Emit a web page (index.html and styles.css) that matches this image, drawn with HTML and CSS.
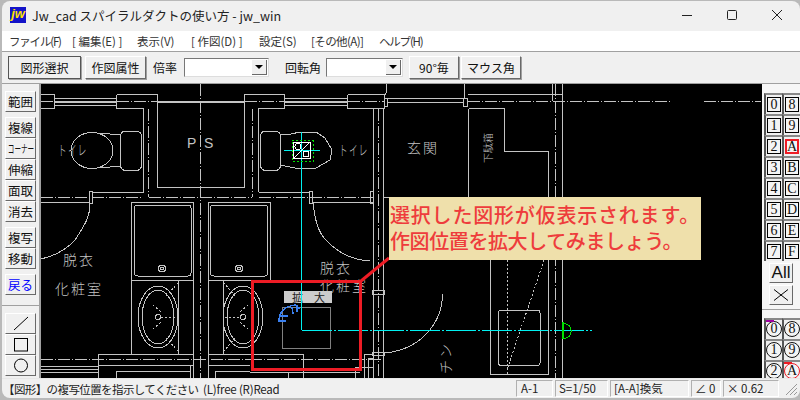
FILE: index.html
```html
<!DOCTYPE html>
<html lang="ja">
<head>
    <meta charset="UTF-8">
    <title>Jw_cad スパイラルダクトの使い方 - jw_win</title>
    <link rel="stylesheet" href="styles.css">
</head>
<body>
<div class="window">
    <div class="titlebar">
        <div class="app-icon">jw</div>
        <div class="title">Jw_cad スパイラルダクトの使い方 - jw_win</div>
        <div class="caption">
            <svg width="12" height="12" viewBox="0 0 12 12"><path d="M1 6.5H11" class="cap-line"/></svg>
            <svg width="12" height="12" viewBox="0 0 12 12"><rect x="1.5" y="1.5" width="9" height="9" rx="1" class="cap-line"/></svg>
            <svg width="12" height="12" viewBox="0 0 12 12"><path d="M1 1L11 11M11 1L1 11" class="cap-line"/></svg>
        </div>
    </div>

    <div class="menubar">
        <span class="kana">ファイル(F)</span>
        <span>[ 編集(E) ]</span>
        <span>表示(V)</span>
        <span>[ 作図(D) ]</span>
        <span>設定(S)</span>
        <span class="kana-some">[その他(A)]</span>
        <span class="kana">ヘルプ(H)</span>
    </div>

    <div class="toolbar">
        <button class="btn btn-default">図形選択</button>
        <button class="btn btn-attr">作図属性</button>
        <span class="tool-label label-scale">倍率</span>
        <div class="combo combo-scale"><div class="combo-arrow"></div></div>
        <span class="tool-label label-angle">回転角</span>
        <div class="combo combo-angle"><div class="combo-arrow"></div></div>
        <button class="btn btn-ninety">90°毎</button>
        <button class="btn btn-mouse">マウス角</button>
    </div>

    <div class="main">
        <div class="side-left">
            <div class="tool-group">
                <button class="tool">範囲</button>
            </div>
            <div class="tool-group">
                <button class="tool">複線</button>
                <button class="tool"><span class="squeeze">コーナー</span></button>
                <button class="tool">伸縮</button>
                <button class="tool">面取</button>
                <button class="tool">消去</button>
            </div>
            <div class="tool-group">
                <button class="tool">複写</button>
                <button class="tool">移動</button>
            </div>
            <div class="tool-group">
                <button class="tool tool-back">戻る</button>
            </div>
            <div class="side-sep"></div>
            <div class="tool-group">
                <button class="tool"><svg width="18" height="15" viewBox="0 0 18 15"><path d="M2 14L16 1" class="draw-icon"/></svg></button>
                <button class="tool"><svg width="16" height="14" viewBox="0 0 16 14"><rect x="1.5" y="0.5" width="13" height="12.5" class="draw-icon"/></svg></button>
                <button class="tool"><svg width="16" height="15" viewBox="0 0 16 15"><circle cx="8" cy="7.5" r="6.5" class="draw-icon"/></svg></button>
            </div>
        </div>

        <div class="canvas">
            <svg class="drawing" width="721" height="294" viewBox="41 84 721 294">
                <!-- walls, top -->
                <g class="line">
                    <path d="M41 94.5H54.5V108.5H41M116.5 94.5H157V101M116.5 94.5V108.5H143.5V192M54.5 98.5H116.5M54.5 105.5H116.5"/>
                    <path d="M157.5 101V187.5H244.5V94.5H284.5V108.5H258.5V192M284.5 98.5H347.5M284.5 105.5H347.5"/>
                    <path d="M347.5 94.5H384.5V108.5H347.5V94.5M384.5 98.5H387.5V106H384.5M387.5 98.5H463.5M387.5 102.5H463.5"/>
                    <path d="M386.5 84V92L384.5 96M464.5 84V98M463.5 98.5H467.5V106H463.5V98.5"/>
                    <path d="M467.5 94.5H562.5M468.5 108.5H504.5V151.5H548.5V197M468.5 108.5V197"/>
                    <path d="M373.5 108.5V378M383.5 108.5V378M562.5 84V378M552.5 84V101"/>
                    <path d="M93 192.5H143.5M258.5 192.5H309M41 202.5H90M313 202.5H373.5M250 202.5H268"/>
                    <path d="M89.5 191.5H92.5V203H89.5ZM309.5 191.5H312.5V203H309.5ZM370.5 191.5H373.5V203H370.5Z"/>
                    <path d="M90 203C90 218 84 226 75 240C66 250 54 256 41 259"/>
                    <path d="M313 203C315 220 318 232 326 240C337 252 352 260 370 261"/>
                    <path d="M384.5 197.5H468.5"/>
                </g>
                <path class="line-thick" d="M54.5 102H116.5M157 102H244.5M284.5 102H347.5"/>
                <g class="line-dash">
                    <path d="M41 101.5H54M116.5 101.5H157M244.5 101.5H284.5M347.5 101.5H384M468 101.5H670M704 101.5H761"/>
                    <path d="M41 197.5H143M148.5 197.5H252M258.5 197.5H373M384 197.5H562"/>
                    <path d="M200.5 84V378M148.5 108.5V197M252.5 108.5V197M378.5 108.5V378M555.5 84V378"/>
                    <path d="M41 359.5H250M250 359.5H384"/>
                </g>

                <!-- toilets -->
                <g class="line">
                    <rect x="120.5" y="131" width="21" height="39.5" rx="5"/>
                    <ellipse cx="92" cy="150.5" rx="21" ry="18"/>
                    <path d="M100 133L120.5 135M100 168L120.5 166"/>
                    <rect x="260.5" y="131" width="20" height="39.5" rx="5"/>
                    <path d="M280.5 135L291 134L300 132H316L325 138L332 150L330 160L316 168L300 169L290 167L280.5 165"/>
                </g>

                <!-- cabinets -->
                <g class="line">
                    <path d="M131.5 280V202.5H193.5V378M208.5 378V202.5H270.5V280"/>
                    <rect x="134.5" y="205" width="56.5" height="71" rx="3"/>
                    <rect x="210.5" y="205" width="57" height="71" rx="3"/>
                    <circle cx="162" cy="268.5" r="3.5"/><circle cx="162" cy="268.5" r="1.5"/>
                    <circle cx="239" cy="268.5" r="3.5"/><circle cx="239" cy="268.5" r="1.5"/>
                    <path d="M131.5 280H193.5M208.5 280H252M131.5 280V354M178.5 280V354M223.5 280V354"/>
                    <ellipse cx="158" cy="317" rx="20" ry="31"/><ellipse cx="158" cy="317" rx="16" ry="27"/>
                    <circle cx="158" cy="317" r="2.5"/>
                    <ellipse cx="243" cy="317" rx="20" ry="31"/><ellipse cx="243" cy="317" rx="16" ry="27"/>
                    <circle cx="243" cy="317" r="2.5"/>
                </g>
                <g class="line-dot">
                    <path d="M161 317H176M153 305L161 312M153 329L161 322M166 296L178 283M166 338L178 351"/>
                    <path d="M225 317H240M248 305L240 312M248 329L240 322M235 296L224 283M235 338L224 351"/>
                </g>

                <!-- lower walls -->
                <g class="line">
                    <path d="M98.5 378V354.5H193.5M98.5 365H193.5M41 366.5H98.5M41 369H98.5M41 372H98.5M116.5 378V371H190M190 365V378"/>
                    <path d="M208.5 354.5H250M208.5 365H250M215 378V371H250"/>
                    <path d="M250 354.5H303.5V378M250 372H303M288 378V372"/>
                    <path d="M364.5 378V354.5H373M368 378V358H373M355 378V367H373M290 372.5H360"/>
                    <path d="M372.5 290.5H384.5V294.5H372.5ZM372.5 352.5H384.5V355.5H372.5Z"/>
                    <path d="M442.5 294C442 326 418 350 384.5 353"/>
                    <rect x="498.5" y="310" width="41.5" height="55.5" rx="3"/>
                    <path d="M490.5 260V374.5H548.5V260"/>
                </g>
                <path class="line-dot" d="M507 260V374M544 260L507 370"/>

                <!-- text in the drawing -->
                <g class="cad-text">
                    <text transform="translate(58 155) scale(.62 1)">トイレ</text>
                    <text x="187" y="148" class="ct-latin">P</text>
                    <text x="204" y="148" class="ct-latin">S</text>
                    <text transform="translate(339 155) scale(.62 1)">トイレ</text>
                    <text x="407" y="153">玄関</text>
                    <text transform="translate(492 163) rotate(-90)" class="ct-vert">下駄箱</text>
                    <text x="63" y="265">脱衣</text>
                    <text x="55" y="294">化粧室</text>
                    <text x="320" y="273">脱衣</text>
                    <text x="320" y="291">化粧室</text>
                    <text transform="translate(451 374) rotate(-90)">チン</text>
                </g>

                <!-- picked figure -->
                <rect class="ghost" x="282.5" y="307.5" width="47.5" height="40.5"/>
                <rect class="zoom-tag" x="284" y="291" width="48" height="12"/>
                <text class="zoom-text" x="292" y="302">拡　大</text>
                <path class="cyan" d="M284 150.5H320"/>
                <path class="cyan" d="M301.5 132V330"/>
                <path class="cyan-dash" d="M301.5 330.5H592"/>
                <rect class="green-dot" x="292" y="140.5" width="21" height="20.5"/>
                <rect class="sym" x="293.5" y="142" width="16.5" height="16.5"/>
                <path class="sym" d="M294 158L310 142"/>
                <circle class="sym" cx="298" cy="146.5" r="3"/>
                <circle class="sym" cx="306" cy="154" r="3"/>
                <path class="green" d="M563 322V339"/>
                <path class="green-thin" d="M563 323C574 325 574 337 563 339"/>
                <path class="blue" d="M279 322C279 313 284 306 296 305M292 307L293 314M297 305V312M279 316H288M280 321H286M298 308H300"/>

                <!-- red frame -->
                <rect class="red-frame" x="252.5" y="281" width="108" height="88"/>
                <path class="red-line" d="M361 281L389 258"/>
            </svg>
            <div class="callout">
                <p class="callout-a">選択した図形が仮表示されます。</p>
                <p class="callout-b">作図位置を拡大してみましょう。</p>
            </div>
        </div>

        <div class="side-right">
            <div class="layer-grid">
                <div class="layer"><span>0</span></div><div class="layer"><span>8</span></div>
                <div class="layer"><span>1</span></div><div class="layer"><span>9</span></div>
                <div class="layer"><span>2</span></div><div class="layer"><span class="layer-on">A</span></div>
                <div class="layer"><span>3</span></div><div class="layer"><span>B</span></div>
                <div class="layer"><span>4</span></div><div class="layer"><span>C</span></div>
                <div class="layer"><span>5</span></div><div class="layer"><span>D</span></div>
                <div class="layer"><span>6</span></div><div class="layer"><span>E</span></div>
                <div class="layer"><span>7</span></div><div class="layer"><span>F</span></div>
            </div>
            <button class="wide-btn wide-all">All</button>
            <button class="wide-btn"><svg width="16" height="12" viewBox="0 0 16 12"><path d="M1 0.5L8 6L1 11.5M15 0.5L8 6L15 11.5" class="draw-icon"/></svg></button>
            <div class="side-sep side-sep-right"></div>
            <div class="layer-grid">
                <div class="layer round"><i class="mark-purple"></i><span>0</span></div><div class="layer round"><span>8</span></div>
                <div class="layer round"><span>1</span></div><div class="layer round"><span>9</span></div>
                <div class="layer round"><span>2</span></div><div class="layer round"><i class="mark-red"></i><span class="layer-on">A</span></div>
            </div>
        </div>
    </div>

    <div class="statusbar">
        <div class="status-msg"><span class="msg-jp">【図形】の複写位置を指示してください</span> <span class="msg-en">(L)free (R)Read</span></div>
        <div class="panel panel-a">A-1</div>
        <div class="panel panel-s">S=1/50</div>
        <div class="panel panel-w">[A-A]換気</div>
        <div class="panel panel-ang">∠ 0</div>
        <div class="panel panel-x">× 0.62</div>
        <svg class="grip" width="15" height="15" viewBox="0 0 15 15"><path d="M14 3L3 14M14 7L7 14M14 11L11 14"/></svg>
    </div>
</div>
</body>
</html>
```

FILE: styles.css
```css
* {
    margin: 0;
    padding: 0;
    box-sizing: border-box;
}

html, body {
    width: 800px;
    height: 400px;
    overflow: hidden;
}

body {
    background-color: #b9b9b9;
    font-family: "Noto Sans CJK JP", "Liberation Sans", sans-serif;
    color: #111;
}

.window {
    width: 798px;
    height: 397px;
    margin: 1px 0 0 2px;
    background-color: #f0f0f0;
    border-radius: 8px;
    overflow: hidden;
}

/* title bar */
.titlebar {
    height: 30px;
    display: flex;
    align-items: center;
    padding: 0 0 2px 8px;
}

.app-icon {
    width: 16px;
    height: 16px;
    background-color: #1414c8;
    color: #ffe000;
    font: italic bold 13px/14px "Liberation Sans", sans-serif;
    text-align: center;
}

.title {
    margin-left: 6px;
    font-size: 12.5px;
    color: #222;
    white-space: nowrap;
}

.caption {
    margin-left: auto;
    display: flex;
    gap: 33px;
    padding-right: 17px;
}

.cap-line {
    fill: none;
    stroke: #222;
    stroke-width: 1;
}

/* menu */
.menubar {
    height: 20px;
    background-color: #fff;
    display: grid;
    grid-template-columns: 63px 65px 54px 68px 52px 68px auto;
    align-items: center;
    padding-left: 7px;
    font-size: 11.5px;
    color: #333;
    white-space: nowrap;
}

.kana {
    letter-spacing: -1.2px;
}

.kana-some {
    letter-spacing: -0.6px;
}

/* toolbar */
.toolbar {
    height: 33px;
    border-top: 1px solid #a0a0a0;
    border-bottom: 1px solid #a0a0a0;
    display: flex;
    align-items: center;
    padding-left: 6px;
}

.btn {
    height: 23px;
    background-color: #f0f0f0;
    border: 1px solid;
    border-color: #fff #696969 #696969 #fff;
    box-shadow: 1px 1px 0 #a0a0a0;
    font-family: inherit;
    font-size: 12px;
    color: #111;
}

.btn-default {
    width: 73px;
    outline: 1px solid #555;
    outline-offset: -1px;
}

.btn-attr {
    width: 61px;
    margin-left: 4px;
}

.tool-label {
    font-size: 12px;
    white-space: nowrap;
}

.label-scale {
    margin-left: 7px;
    width: 31px;
}

.label-angle {
    margin-left: 16px;
    width: 41px;
}

.combo {
    height: 19px;
    background-color: #fff;
    border: 1px solid;
    border-color: #777 #ddd #ddd #777;
    position: relative;
}

.combo-scale {
    width: 85px;
}

.combo-angle {
    width: 77px;
}

.combo-arrow {
    position: absolute;
    right: 1px;
    top: 1px;
    width: 15px;
    height: 15px;
    background-color: #f0f0f0;
    border-right: 1px solid #696969;
    border-bottom: 1px solid #696969;
}

.combo-arrow::after {
    content: "";
    position: absolute;
    left: 3px;
    top: 5px;
    border-left: 4px solid transparent;
    border-right: 4px solid transparent;
    border-top: 4px solid #000;
}

.btn-ninety {
    width: 50px;
    margin-left: 6px;
}

.btn-mouse {
    width: 60px;
    margin-left: 2px;
}

/* main area */
.main {
    height: 294px;
    display: flex;
}

.side-left {
    width: 39px;
    height: 294px;
    overflow: hidden;
    padding: 7px 0 0 3px;
    border-right: 2px solid #a0a0a0;
}

.tool-group {
    display: flex;
    flex-direction: column;
    margin-bottom: 5px;
}

.tool {
    width: 31px;
    height: 21px;
    flex: none;
    background-color: #f0f0f0;
    border: 1px solid;
    border-color: #fff #696969 #696969 #fff;
    font-family: inherit;
    font-size: 12.5px;
    line-height: 17px;
    color: #111;
    display: flex;
    align-items: center;
    justify-content: center;
    white-space: nowrap;
}

.squeeze {
    display: inline-block;
    font-size: 11px;
    transform: scaleX(.6);
}

.tool-back {
    color: #0000ff;
}

.side-sep {
    height: 1px;
    background-color: #a0a0a0;
    margin: 10px 0 7px -3px;
}

.side-sep-right {
    margin: 4px 0 8px 0;
}

.draw-icon {
    fill: none;
    stroke: #000;
    stroke-width: 1;
}

.canvas {
    width: 721px;
    height: 294px;
    background-color: #000;
    position: relative;
    overflow: hidden;
}

.drawing {
    display: block;
    shape-rendering: crispEdges;
}

.drawing .line,
.drawing .line * {
    fill: none;
    stroke: #c4c4c4;
    stroke-width: 1;
}

.line-thick {
    fill: none;
    stroke: #c4c4c4;
    stroke-width: 2;
}

.line-dash {
    fill: none;
    stroke: #c4c4c4;
    stroke-width: 1;
    stroke-dasharray: 12 2 1 2;
}

.line-dot {
    fill: none;
    stroke: #c4c4c4;
    stroke-width: 1;
    stroke-dasharray: 2 2;
}

.cad-text text {
    fill: #c4c4c4;
    font-size: 14px;
    font-weight: 300;
    letter-spacing: 2px;
}

.drawing .ct-latin {
    font: 14px "Liberation Sans", sans-serif;
}

.drawing .ct-vert {
    font-size: 10px;
    letter-spacing: 0;
}

.ghost {
    fill: none;
    stroke: #808080;
}

.zoom-tag {
    fill: #cccccc;
}

.zoom-text {
    fill: #222;
    font-size: 11px;
}

.cyan {
    fill: none;
    stroke: #00f0f0;
}

.cyan-dash {
    fill: none;
    stroke: #00f0f0;
    stroke-dasharray: 30 2 2 2;
}

.green-dot {
    fill: none;
    stroke: #00e000;
    stroke-dasharray: 2 2;
}

.green {
    fill: none;
    stroke: #00e000;
    stroke-width: 2;
}

.green-thin {
    fill: none;
    stroke: #00e000;
}

.sym {
    fill: none;
    stroke: #fff;
}

.blue {
    fill: none;
    stroke: #3a80f0;
    stroke-width: 1.5;
}

.red-frame {
    fill: none;
    stroke: #ee1c25;
    stroke-width: 3;
}

.red-line {
    fill: none;
    stroke: #ee1c25;
    stroke-width: 3;
    shape-rendering: auto;
}

.callout {
    position: absolute;
    left: 348px;
    top: 113px;
    width: 312px;
    height: 63px;
    background-color: #efe0ab;
    color: #ee3c3c;
    font-size: 20px;
    font-weight: 500;
    line-height: 26px;
    padding: 5px 0 0 1px;
    white-space: nowrap;
}

.callout-a {
    letter-spacing: 0.8px;
}

.callout-b {
    letter-spacing: -0.4px;
}

/* right column */
.side-right {
    width: 38px;
    height: 294px;
    overflow: hidden;
    background-color: #f6f6f6;
    padding-top: 9px;
}

.layer-grid {
    display: grid;
    grid-template-columns: 18px 18px;
    grid-auto-rows: 21px;
    padding-left: 2px;
}

.layer {
    position: relative;
    border-left: 2px solid #555;
    border-top: 2px solid #888;
    background-color: #f0f0f0;
    padding: 2px 1px 1px 1px;
}

.layer span {
    display: block;
    height: 15px;
    border: 1px solid #000;
    background-color: #f4f4f4;
    font: 14px/13px "Liberation Serif", serif;
    text-align: center;
    color: #111;
}

.layer .layer-on {
    border: 2px solid #ee1c25;
    line-height: 11px;
}

.round {
    padding: 0;
}

.round span {
    height: 16px;
    width: 16px;
    margin-top: 1px;
    border-radius: 50%;
    border-color: #111;
    line-height: 14px;
}

.mark-purple,
.mark-red {
    position: absolute;
    top: 0;
    left: 0;
    width: 8px;
    height: 2px;
    background-color: #a000a0;
}

.mark-red {
    background-color: #ee1c25;
}

.round .layer-on {
    border-width: 1px;
    border-color: #ee1c25;
    line-height: 14px;
}

.wide-btn {
    display: flex;
    align-items: center;
    justify-content: center;
    width: 24px;
    height: 20px;
    margin: 2px 0 0 7px;
    background-color: #f0f0f0;
    border: 1px solid;
    border-color: #fff #696969 #696969 #fff;
    font: 17px "Liberation Sans", sans-serif;
    color: #111;
}

/* status bar */
.statusbar {
    height: 20px;
    display: flex;
    align-items: center;
    font-size: 11.5px;
    color: #222;
    white-space: nowrap;
    border-top: 1px solid #e8e8e8;
}

.status-msg {
    width: 514px;
    padding-left: 1px;
}

.msg-jp {
    letter-spacing: -0.6px;
}

.msg-en {
    letter-spacing: -0.2px;
    margin-left: 2px;
}

.panel {
    height: 17px;
    line-height: 15px;
    border: 1px solid;
    border-color: #b0b0b0 #fff #fff #b0b0b0;
    margin-right: 2px;
    padding-left: 3px;
}

.panel-a {
    width: 37px;
    padding-left: 4px;
}

.panel-s {
    width: 53px;
}

.panel-w {
    width: 79px;
}

.panel-ang {
    width: 30px;
}

.panel-x {
    width: 56px;
}

.grip {
    margin-left: 2px;
    fill: none;
    stroke: #999;
}
```
